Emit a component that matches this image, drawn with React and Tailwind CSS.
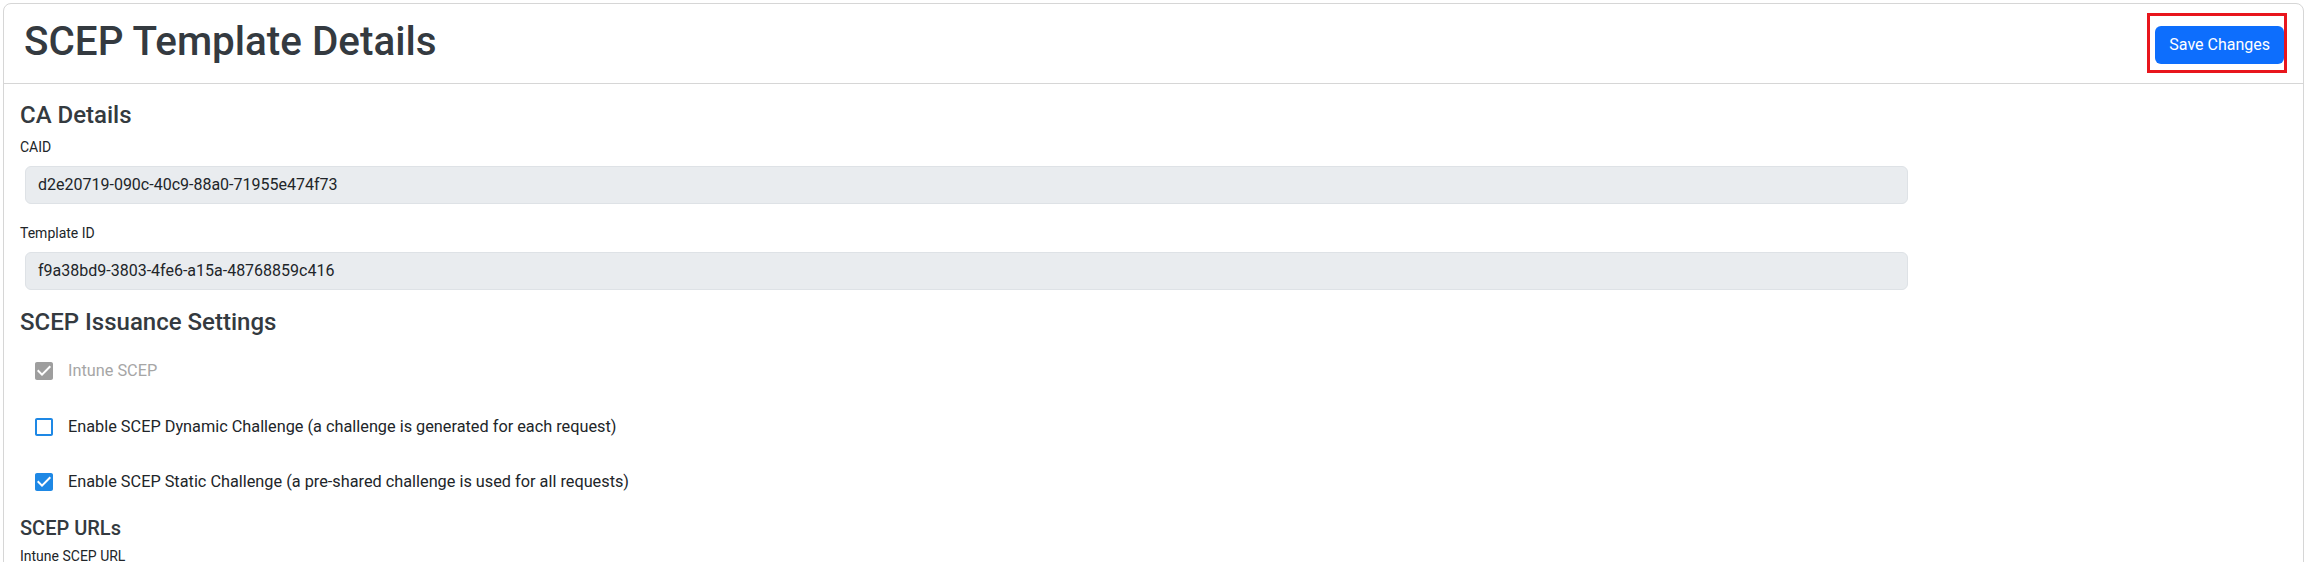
import { useState } from "react";

const CHECKED_PATH =
  "M19 3H5c-1.11 0-2 .9-2 2v14c0 1.1.89 2 2 2h14c1.11 0 2-.9 2-2V5c0-1.1-.89-2-2-2zm-9 14l-5-5 1.41-1.41L10 14.17l7.59-7.59L19 8l-9 9z";
const UNCHECKED_PATH =
  "M19 5v14H5V5h14m0-2H5c-1.1 0-2 .9-2 2v14c0 1.1.9 2 2 2h14c1.1 0 2-.9 2-2V5c0-1.1-.9-2-2-2z";

function CheckRow({ label, checked, disabled, onToggle, className }) {
  const color = disabled ? "text-[#9e9e9e]" : "text-[#1e88e5]";
  return (
    <label
      className={`flex h-[42px] cursor-pointer items-center gap-[12px] pl-[12px] ${className}`}
      onClick={disabled ? undefined : onToggle}
    >
      <svg viewBox="0 0 24 24" className={`h-6 w-6 shrink-0 fill-current ${color}`}>
        <path d={checked ? CHECKED_PATH : UNCHECKED_PATH} />
      </svg>
      <span
        className={`text-[16.3px] leading-[24px] ${
          disabled ? "text-[#a6a6a6]" : "text-[#212529]"
        }`}
      >
        {label}
      </span>
    </label>
  );
}

function ReadOnlyField({ label, value, className }) {
  return (
    <div className={className}>
      <label className="mb-2 block text-[14px] leading-[21px] text-[#212529]">
        {label}
      </label>
      <div className="ml-[5px] flex h-[38px] w-[1883px] items-center rounded-[6px] border border-[#dee2e6] bg-[#e9ecef] px-3 text-[16px] text-[#212529]">
        {value}
      </div>
    </div>
  );
}

export default function App() {
  const [dynamicChallenge, setDynamicChallenge] = useState(false);
  const [staticChallenge, setStaticChallenge] = useState(true);

  return (
    <div
      className="h-screen overflow-hidden bg-white p-[3px]"
      style={{ fontFamily: "Roboto, 'Liberation Sans', sans-serif" }}
    >
      <div className="min-h-[700px] rounded-[8px] border border-[#d6d6d6] bg-white">
        {/* header */}
        <div className="flex h-[80px] items-start justify-between border-b border-[#d6d6d6] pl-[20px] pr-[19px]">
          <h1 className="mt-[14px] text-[40.4px] font-medium leading-[48px] text-[#343a40]">
            SCEP Template Details
          </h1>
          <div className="relative mt-[22px]">
            <button
              type="button"
              className="h-[38px] rounded-[6px] bg-[#0d6efd] px-[14px] text-[16px] text-white"
            >
              Save Changes
            </button>
            <span className="pointer-events-none absolute -left-[8px] -top-[13px] h-[60px] w-[140px] border-[3px] border-[#e8161d]" />
          </div>
        </div>

        {/* body */}
        <div className="px-4 pt-[17px]">
          <h4 className="mb-[7px] text-[24px] font-medium leading-[1.2] text-[#343a40]">
            CA Details
          </h4>
          <ReadOnlyField
            label="CAID"
            value="d2e20719-090c-40c9-88a0-71955e474f73"
          />
          <ReadOnlyField
            className="mt-[19px]"
            label="Template ID"
            value="f9a38bd9-3803-4fe6-a15a-48768859c416"
          />

          <h4 className="mt-[18px] text-[24px] font-medium leading-[1.2] text-[#343a40]">
            SCEP Issuance Settings
          </h4>
          <CheckRow className="mt-[13px]" label="Intune SCEP" checked disabled />
          <CheckRow
            className="mt-[14px]"
            label="Enable SCEP Dynamic Challenge (a challenge is generated for each request)"
            checked={dynamicChallenge}
            onToggle={() => setDynamicChallenge(!dynamicChallenge)}
          />
          <CheckRow
            className="mt-[13px]"
            label="Enable SCEP Static Challenge (a pre-shared challenge is used for all requests)"
            checked={staticChallenge}
            onToggle={() => setStaticChallenge(!staticChallenge)}
          />

          <h5 className="mt-[13px] text-[20px] font-medium leading-[1.2] text-[#343a40]">
            SCEP URLs
          </h5>
          <ReadOnlyField
            className="mt-[6px]"
            label="Intune SCEP URL"
            value="https://scep.example.com/intune"
          />
        </div>
      </div>
    </div>
  );
}
